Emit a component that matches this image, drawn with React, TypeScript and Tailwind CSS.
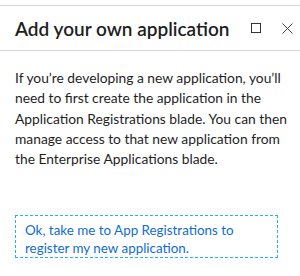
import React from "react";

export default function App() {
  return (
    <div className="w-[300px] h-[276px] bg-white overflow-hidden" style={{ fontFamily: 'Lato, "Noto Sans", sans-serif' }}>
      <div className="h-[5px]" />
      <div className="border-t border-b border-[#d6d6d6] h-[46px] flex items-center pl-[15px] pr-[7px]">
        <div className="flex-1 text-[19px] font-semibold text-[#1e1e1e] leading-none pt-[1px]">Add your own application</div>
        <div className="flex items-center gap-[21px]">
          <svg width="10" height="10" viewBox="0 0 10 10"><rect x="0.5" y="0.5" width="9" height="9" fill="none" stroke="#333" strokeWidth="1" /></svg>
          <svg width="11" height="11" viewBox="0 0 11 11"><path d="M0.5 0.5L10.5 10.5M10.5 0.5L0.5 10.5" stroke="#444" strokeWidth="1" /></svg>
        </div>
      </div>
      <p className="pl-[15px] pr-[6px] pt-[17px] text-[13.8px] leading-[20.3px] text-[#1e1e1e]">
        If you’re developing a new application, you’ll need to first create the application in the Application Registrations blade. You can then manage access to that new application from the Enterprise Applications blade.
      </p>
      <div className="mt-[46px] ml-[15px] w-[263px] h-[43px] border border-dashed border-[#1fb8e6] pl-[9px] pt-[5px] text-[13.4px] leading-[18px] text-[#106ccf]">
        Ok, take me to App Registrations to register my new application.
      </div>
    </div>
  );
}
